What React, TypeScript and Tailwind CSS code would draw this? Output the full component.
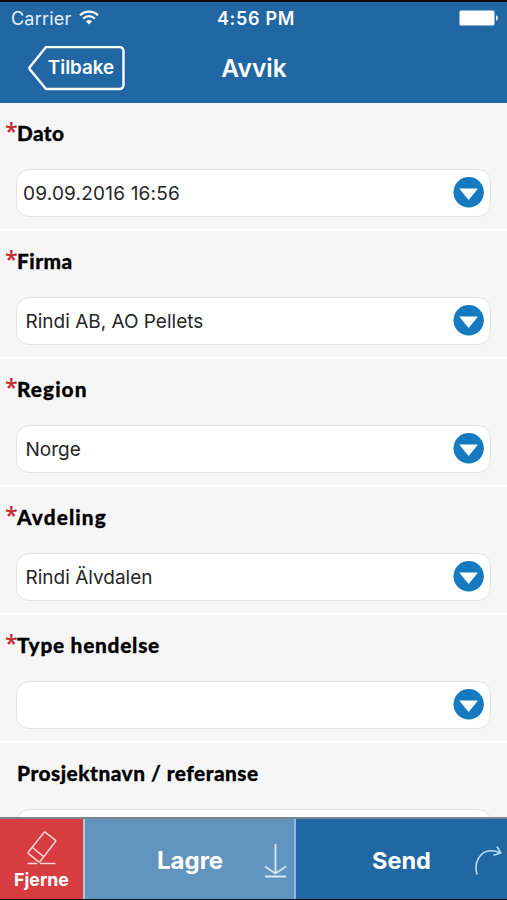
import React from "react";

type Field = {
  label: string;
  labelClass: string;
  value: string;
  valueClass: string;
  required: boolean;
};

const fields: Field[] = [
  { label: "Dato", labelClass: "tracking-[0.4px]", value: "09.09.2016 16:56", valueClass: "pl-[6px] tracking-[0.2px]", required: true },
  { label: "Firma", labelClass: "tracking-[0.5px]", value: "Rindi AB, AO Pellets", valueClass: "pl-[8.5px]", required: true },
  { label: "Region", labelClass: "tracking-[1.05px]", value: "Norge", valueClass: "pl-[8.5px]", required: true },
  { label: "Avdeling", labelClass: "tracking-[1.1px]", value: "Rindi Älvdalen", valueClass: "pl-[8.5px]", required: true },
  { label: "Type hendelse", labelClass: "tracking-[0.75px]", value: "", valueClass: "", required: true },
  { label: "Prosjektnavn / referanse", labelClass: "tracking-[0.5px]", value: "", valueClass: "", required: false },
];

function Wifi() {
  return (
    <svg width="20" height="15" viewBox="0 0 20 15" fill="none" stroke="white" strokeWidth="2.2" className="-mt-[2px]">
      <path d="M1 5.2C6 .3 14 .3 19 5.2" />
      <path d="M4.2 8.6c3.4-3.2 8.2-3.2 11.6 0" />
      <path d="M6.9 11.3c1.8-1.7 4.4-1.7 6.2 0L10 14.5Z" fill="white" stroke="none" />
    </svg>
  );
}

function Battery() {
  return (
    <svg width="40" height="16" viewBox="0 0 40 16" fill="white">
      <rect x=".5" y=".5" width="35" height="15" rx="1.5" />
      <path d="M37 5.5c2.6.6 2.6 4.4 0 5Z" />
    </svg>
  );
}

function Row({ field }: { field: Field }) {
  return (
    <section className="h-[128px] shrink-0 border-b-2 border-white px-4">
      <div className="flex h-[66px] pt-[16px]">
        <span className="-ml-[11px] -mt-[2px] w-[12px] font-['Open_Sans',sans-serif] text-[23px] font-semibold leading-7 text-[#c4222f]">
          {field.required ? "*" : ""}
        </span>
        <h2 className={`whitespace-nowrap font-['Lato',sans-serif] text-[20.8px] font-black leading-7 text-black [-webkit-text-stroke:0.3px_black] ${field.labelClass}`}>
          {field.label}
        </h2>
      </div>
      <div className="flex h-[48px] items-center justify-between rounded-[13px] border-[1.5px] border-[#e3e3e4] bg-white pr-[6px]">
        <span className={`pt-[2px] font-['Inter',sans-serif] text-[19px] text-[#262626] ${field.valueClass}`}>{field.value}</span>
        {field.required && (
          <svg width="31" height="31" viewBox="0 0 31 31" className="-mt-[2px] shrink-0">
            <circle cx="15.7" cy="15.3" r="15.2" fill="#167ac2" />
            <path d="M6.2 11.5h18.8L15.6 23Z" fill="white" />
          </svg>
        )}
      </div>
    </section>
  );
}

export default function App() {
  return (
    <div className="flex h-[900px] w-[507px] flex-col overflow-hidden bg-[#f6f6f7] font-['Inter',sans-serif]">
      <header className="h-[103px] shrink-0 border-t-2 border-[#05080d] bg-[#2167a3] text-white">
        <div className="grid h-8 grid-cols-3 items-center pl-[11px] pr-[8px]">
          <div className="flex items-center gap-[8px] text-[18px] text-[#e6f0fa]">
            <span className="tracking-[0.2px]">Carrier</span>
            <Wifi />
          </div>
          <span className="pl-[2px] text-center text-[18px] font-semibold tracking-[0.7px]">4:56 PM</span>
          <div className="flex justify-end"><Battery /></div>
        </div>
        <div className="grid h-[68px] grid-cols-3 items-center px-7">
          <button className="relative h-[45px] w-[98px]">
            <svg width="98" height="45" viewBox="0 0 98 45" fill="none" stroke="white" strokeWidth="2.4" strokeLinejoin="round" className="absolute inset-0">
              <path d="M18 1h73.5a4 4 0 0 1 4 4v34a4 4 0 0 1-4 4H18L1.5 23v-1.5Z" />
            </svg>
            <span className="relative block pl-[8px] text-[18.8px] font-semibold">Tilbake</span>
          </button>
          <h1 className="pl-[1px] pt-[1px] text-center text-[24.5px] font-semibold">Avvik</h1>
        </div>
      </header>
      <main className="flex min-h-0 flex-1 flex-col overflow-hidden">
        {fields.map((field) => <Row key={field.label} field={field} />)}
      </main>
      <footer className="flex h-[83px] shrink-0 border-b border-t-2 border-b-[#07111c] border-t-[#7b858e] font-bold text-white">
        <button className="flex w-[83px] flex-col items-center bg-[#d63c40] pt-[12px]">
          <svg width="30" height="35" viewBox="0 0 30 35" fill="none" stroke="#fbd7d6" strokeWidth="1.5" strokeLinejoin="round">
            <path d="M18.5 1.3 28.3 9.2a1 1 0 0 1 .2 1.3L13.2 30.2a1.5 1.5 0 0 1-2.1.2L1.8 22.8a1.5 1.5 0 0 1-.2-2.1L17 1.5a1 1 0 0 1 1.5-.2Z" />
            <path d="m5.5 16.5 11.3 9.3M.5 32.5h9.8m2.6 0h15.6" />
          </svg>
          <span className="pt-[2px] text-[17.8px] leading-6">Fjerne</span>
        </button>
        <button className="flex w-[213px] items-center justify-between border-l-2 border-r-2 border-l-[#b6c5d8] border-r-[#91bade] bg-[#6194bf] pl-[72px] pr-[7px]">
          <span className="pt-[3px] text-[24px]">Lagre</span>
          <svg width="23" height="34" viewBox="0 0 23 34" fill="none" stroke="#d5e9f8" strokeWidth="1.8" className="mt-[3px]">
            <path d="M11.5 0v29M1 22.5l10.5 7 10.5-7M1 32.5h21" />
          </svg>
        </button>
        <button className="flex flex-1 items-center justify-between bg-[#2167a3] pl-[76px] pr-[5px]">
          <span className="pt-[3px] text-[23.5px]">Send</span>
          <svg width="28" height="30" viewBox="0 0 28 30" fill="none" stroke="#b9dcf5" strokeWidth="1.6" strokeLinecap="round" strokeLinejoin="round" className="mt-[4px]">
            <path d="M3 28C-.5 17 6 4.5 17 4.7c3.5 0 6.5.8 9.7 2.2M23.2 1l3.5 5.9-6.5 2.2" />
          </svg>
        </button>
      </footer>
    </div>
  );
}
